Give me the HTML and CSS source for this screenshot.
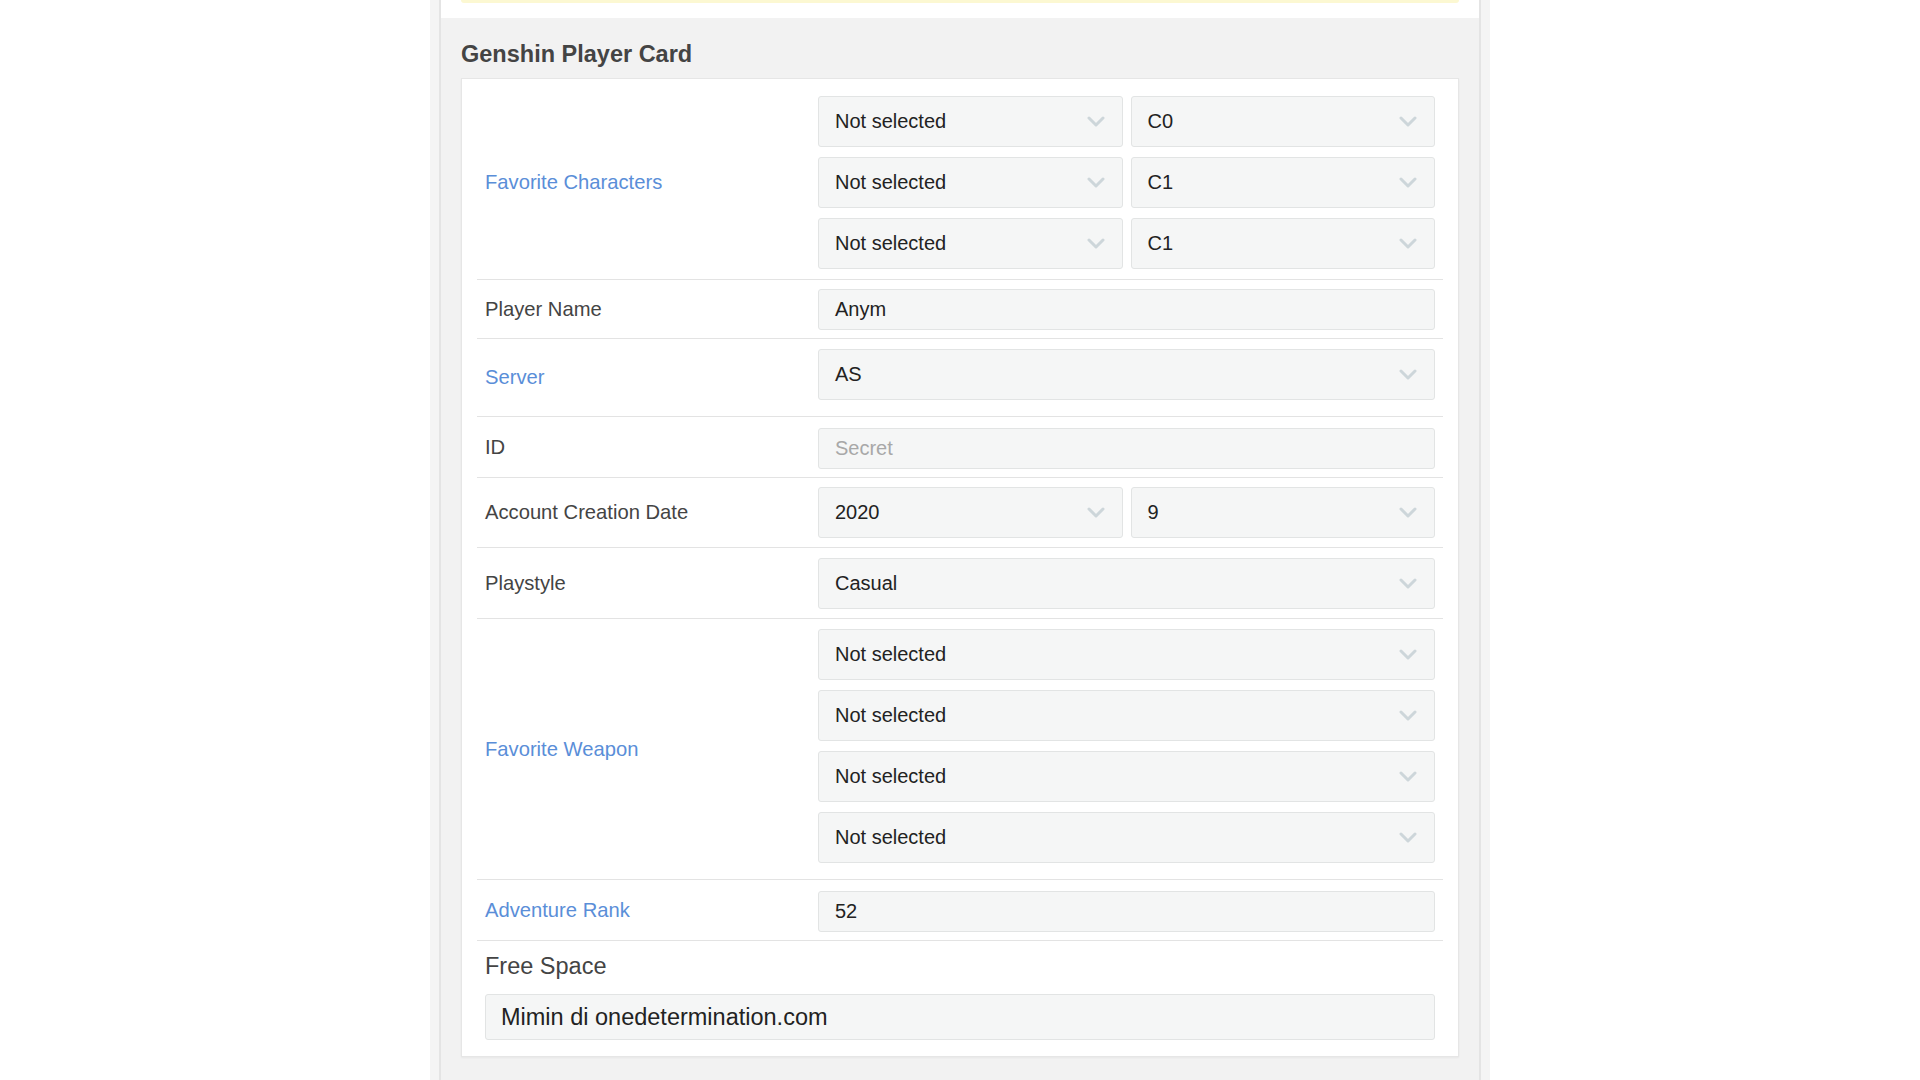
FILE: index.html
```html
<!DOCTYPE html>
<html lang="en">
<head>
<meta charset="utf-8">
<title>Genshin Player Card</title>
<link rel="stylesheet" href="styles.css">
</head>
<body>
<div class="frame">
  <div class="main">
    <div class="top">
      <div class="notice"></div>
    </div>
    <section class="section">
      <h2 class="title">Genshin Player Card</h2>
      <div class="card">
        <div class="row">
          <div class="label link">Favorite Characters</div>
          <div class="value stack">
            <div class="pair">
              <div class="select"><span>Not selected</span><svg class="chev" viewBox="0 0 18 11"><polyline points="2,2 9,9 16,2"/></svg></div>
              <div class="select"><span>C0</span><svg class="chev" viewBox="0 0 18 11"><polyline points="2,2 9,9 16,2"/></svg></div>
            </div>
            <div class="pair">
              <div class="select"><span>Not selected</span><svg class="chev" viewBox="0 0 18 11"><polyline points="2,2 9,9 16,2"/></svg></div>
              <div class="select"><span>C1</span><svg class="chev" viewBox="0 0 18 11"><polyline points="2,2 9,9 16,2"/></svg></div>
            </div>
            <div class="pair">
              <div class="select"><span>Not selected</span><svg class="chev" viewBox="0 0 18 11"><polyline points="2,2 9,9 16,2"/></svg></div>
              <div class="select"><span>C1</span><svg class="chev" viewBox="0 0 18 11"><polyline points="2,2 9,9 16,2"/></svg></div>
            </div>
          </div>
        </div>
        <div class="row">
          <div class="label">Player Name</div>
          <div class="value v-input"><div class="input">Anym</div></div>
        </div>
        <div class="row">
          <div class="label link">Server</div>
          <div class="value v-tall"><div class="select"><span>AS</span><svg class="chev" viewBox="0 0 18 11"><polyline points="2,2 9,9 16,2"/></svg></div></div>
        </div>
        <div class="row">
          <div class="label">ID</div>
          <div class="value v-input2"><div class="input placeholder">Secret</div></div>
        </div>
        <div class="row">
          <div class="label">Account Creation Date</div>
          <div class="value v-sel">
            <div class="pair">
              <div class="select"><span>2020</span><svg class="chev" viewBox="0 0 18 11"><polyline points="2,2 9,9 16,2"/></svg></div>
              <div class="select"><span>9</span><svg class="chev" viewBox="0 0 18 11"><polyline points="2,2 9,9 16,2"/></svg></div>
            </div>
          </div>
        </div>
        <div class="row">
          <div class="label">Playstyle</div>
          <div class="value"><div class="select"><span>Casual</span><svg class="chev" viewBox="0 0 18 11"><polyline points="2,2 9,9 16,2"/></svg></div></div>
        </div>
        <div class="row">
          <div class="label link">Favorite Weapon</div>
          <div class="value stack v-tall">
            <div class="select"><span>Not selected</span><svg class="chev" viewBox="0 0 18 11"><polyline points="2,2 9,9 16,2"/></svg></div>
            <div class="select"><span>Not selected</span><svg class="chev" viewBox="0 0 18 11"><polyline points="2,2 9,9 16,2"/></svg></div>
            <div class="select"><span>Not selected</span><svg class="chev" viewBox="0 0 18 11"><polyline points="2,2 9,9 16,2"/></svg></div>
            <div class="select"><span>Not selected</span><svg class="chev" viewBox="0 0 18 11"><polyline points="2,2 9,9 16,2"/></svg></div>
          </div>
        </div>
        <div class="row">
          <div class="label link">Adventure Rank</div>
          <div class="value v-input2"><div class="input">52</div></div>
        </div>
        <div class="free">
          <div class="free-label">Free Space</div>
          <div class="input big">Mimin di onedetermination.com</div>
        </div>
      </div>
    </section>
  </div>
</div>
</body>
</html>
```

FILE: styles.css
```css
html, body {
  margin: 0;
  padding: 0;
  background: #ffffff;
  font-family: "Liberation Sans", Arial, sans-serif;
}

.frame {
  width: 1060px;
  margin: 0 auto;
  padding: 0 9px;
  box-sizing: border-box;
  background: #f4f4f4;
  min-height: 1080px;
  display: flex;
}

.main {
  flex: 1;
  border-left: 2px solid #e4e4e4;
  border-right: 2px solid #e4e4e4;
  background: #f2f2f2;
  display: flex;
  flex-direction: column;
}

.top {
  background: #ffffff;
  height: 18px;
  padding: 0 20px;
}

.notice {
  height: 3px;
  background: #fcf8d2;
  border-radius: 0 0 4px 4px;
}

.section {
  padding: 22px 20px 20px;
}

.title {
  margin: 0 0 10px;
  font-size: 23.5px;
  line-height: 28px;
  font-weight: bold;
  color: #444444;
}

.card {
  background: #ffffff;
  border: 1px solid #e6e6e6;
  box-shadow: 0 1px 2px rgba(0, 0, 0, 0.05);
  padding: 7px 15px 16px;
}

.row {
  display: grid;
  grid-template-columns: 333px 1fr;
  border-bottom: 1px solid #e3e3e3;
}

.label {
  display: flex;
  align-items: center;
  padding: 0 8px;
  font-size: 20.2px;
  color: #444444;
}

.label.link {
  color: #5a8ed8;
}

.value {
  padding: 10px 8px 9px;
}

.value.stack {
  display: flex;
  flex-direction: column;
  gap: 10px;
  padding-bottom: 10px;
}

.value.v-tall {
  padding-bottom: 16px;
}

.value.v-input {
  padding: 9px 8px 8px;
}

.value.v-input2 {
  padding: 11px 8px 8px;
}

.value.v-sel {
  padding: 9px 8px 9px;
}

.pair {
  display: grid;
  grid-template-columns: 1fr 1fr;
  gap: 8px;
}

.select,
.input {
  display: flex;
  align-items: center;
  justify-content: space-between;
  box-sizing: border-box;
  height: 51px;
  padding: 0 17px 0 16px;
  background: #f5f6f6;
  border: 1px solid #e2e4e4;
  border-radius: 3px;
  font-size: 20px;
  color: #222222;
}

.input {
  height: 41px;
}

.input.placeholder {
  color: #a8a8a8;
}

.chev {
  width: 18px;
  height: 11px;
  flex: none;
}

.chev polyline {
  fill: none;
  stroke: #cdd6da;
  stroke-width: 3;
  stroke-linecap: round;
  stroke-linejoin: round;
}

.free {
  padding: 11px 8px 0;
}

.free-label {
  font-size: 23.5px;
  line-height: 28px;
  color: #444444;
  margin-bottom: 14px;
}

.input.big {
  height: 46px;
  font-size: 23.5px;
  padding-left: 15px;
}
```
